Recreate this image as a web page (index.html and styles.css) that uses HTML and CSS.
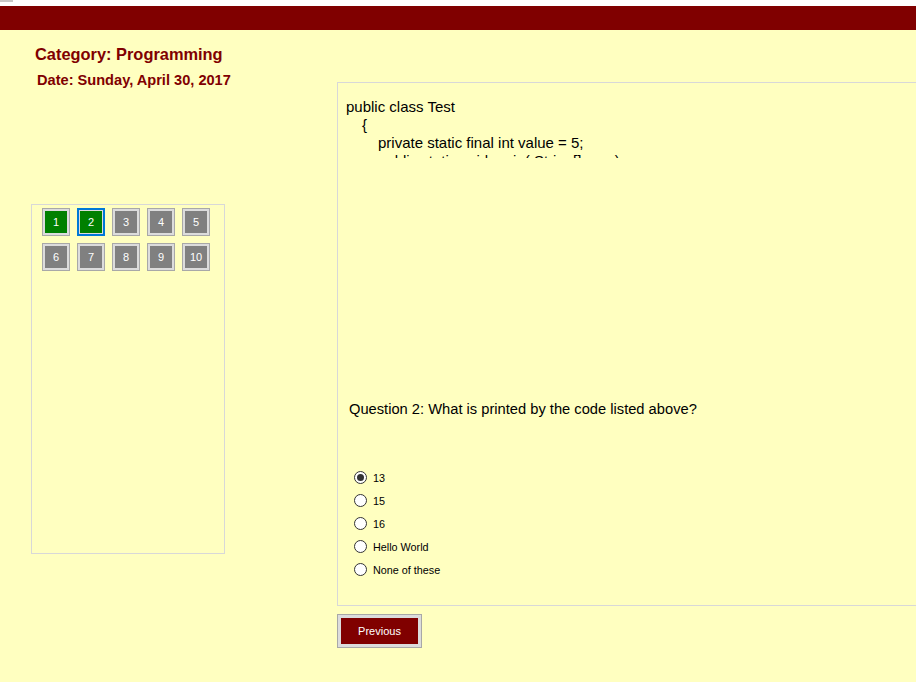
FILE: index.html
```
<!DOCTYPE html>
<html>
<head>
<meta charset="utf-8">
<link rel="stylesheet" href="styles.css">
</head>
<body>
<div class="topstrip"><div class="tick"></div></div>
<div class="titlebar"></div>
<div class="main">
  <div class="leftcol">
    <div class="category">Category: Programming</div>
    <div class="date">Date: Sunday, April 30, 2017</div>
    <div class="panel">
      <div class="qgrid">
        <div class="qbtn done">1</div>
        <div class="qbtn done current">2</div>
        <div class="qbtn">3</div>
        <div class="qbtn">4</div>
        <div class="qbtn">5</div>
        <div class="qbtn">6</div>
        <div class="qbtn">7</div>
        <div class="qbtn">8</div>
        <div class="qbtn">9</div>
        <div class="qbtn">10</div>
      </div>
    </div>
  </div>
  <div class="rightcol">
    <div class="qbox">
      <div class="code">
        <div class="cl">public class Test</div>
        <div class="cl i1">{</div>
        <div class="cl i2">private static final int value = 5;</div>
        <div class="cl i2">public static void main( String[] args)</div>
      </div>
      <div class="question">Question 2: What is printed by the code listed above?</div>
      <div class="options">
        <div class="opt"><span class="radio checked"></span><span class="lbl">13</span></div>
        <div class="opt"><span class="radio"></span><span class="lbl">15</span></div>
        <div class="opt"><span class="radio"></span><span class="lbl">16</span></div>
        <div class="opt"><span class="radio"></span><span class="lbl">Hello World</span></div>
        <div class="opt"><span class="radio"></span><span class="lbl">None of these</span></div>
      </div>
    </div>
    <div class="btnrow"><div class="prevbtn">Previous</div></div>
  </div>
</div>
</body>
</html>
```

FILE: styles.css
```
html, body {
  margin: 0;
  padding: 0;
  overflow: hidden;
}
body {
  background: #ffffc0;
  font-family: "Liberation Sans", Arial, sans-serif;
  width: 916px;
  height: 682px;
}
.topstrip {
  height: 6px;
  background: #ffffff;
}
.tick {
  width: 13px;
  height: 2px;
  background: #c8c8c8;
}
.titlebar {
  height: 24px;
  background: #800000;
}
.main {
  display: flex;
}
.leftcol {
  width: 306px;
  flex: none;
  padding-left: 31px;
}
.category {
  margin-top: 14px;
  margin-left: 4px;
  font-size: 16.4px;
  line-height: 20px;
  font-weight: bold;
  color: #800000;
}
.date {
  margin-top: 7px;
  margin-left: 6px;
  font-size: 14.6px;
  line-height: 18px;
  font-weight: bold;
  color: #800000;
}
.panel {
  margin-top: 115px;
  width: 192px;
  height: 348px;
  border: 1px solid #d8d8d8;
}
.qgrid {
  display: grid;
  grid-template-columns: repeat(5, 28px);
  grid-auto-rows: 28px;
  gap: 7px;
  padding: 3px 0 0 10px;
}
.qbtn {
  box-sizing: border-box;
  width: 28px;
  height: 28px;
  border: 1px solid #a8a8a8;
  box-shadow: inset 0 0 0 2px #dcdcdc;
  background: #808080;
  color: #ffffff;
  font-size: 11px;
  display: flex;
  align-items: center;
  justify-content: center;
}
.qbtn.done {
  background: #008000;
}
.qbtn.current {
  border: 2px solid #0078d7;
  box-shadow: inset 0 0 0 1px #dcdcdc;
}
.rightcol {
  flex: none;
  width: 620px;
}
.qbox {
  margin-top: 52px;
  box-sizing: border-box;
  width: 620px;
  height: 524px;
  border: 1px solid #d8d8d8;
  color: #000;
}
.code {
  margin-top: 15px;
  padding-left: 8px;
  height: 60px;
  overflow: hidden;
  font-size: 15px;
  line-height: 18px;
}
.cl { white-space: nowrap; }
.i1 { padding-left: 16px; }
.i2 { padding-left: 32px; }
.question {
  margin-top: 242px;
  padding-left: 11px;
  font-size: 14.7px;
  line-height: 18px;
}
.options {
  margin-top: 48px;
  padding-left: 16px;
}
.opt {
  height: 23px;
  display: flex;
  align-items: center;
}
.radio {
  box-sizing: border-box;
  width: 13px;
  height: 13px;
  border: 1px solid #333333;
  border-radius: 50%;
  background: #ffffff;
  display: flex;
  align-items: center;
  justify-content: center;
}
.radio.checked::after {
  content: "";
  width: 7px;
  height: 7px;
  border-radius: 50%;
  background: #333333;
}
.lbl {
  margin-left: 6px;
  font-size: 10.8px;
}
.btnrow {
  margin-top: 8px;
}
.prevbtn {
  box-sizing: border-box;
  width: 85px;
  height: 34px;
  border: 1px solid #a8a8a8;
  box-shadow: inset 0 0 0 3px #dcdcdc;
  background: #800000;
  color: #ffffff;
  font-size: 11px;
  display: flex;
  align-items: center;
  justify-content: center;
}
```
